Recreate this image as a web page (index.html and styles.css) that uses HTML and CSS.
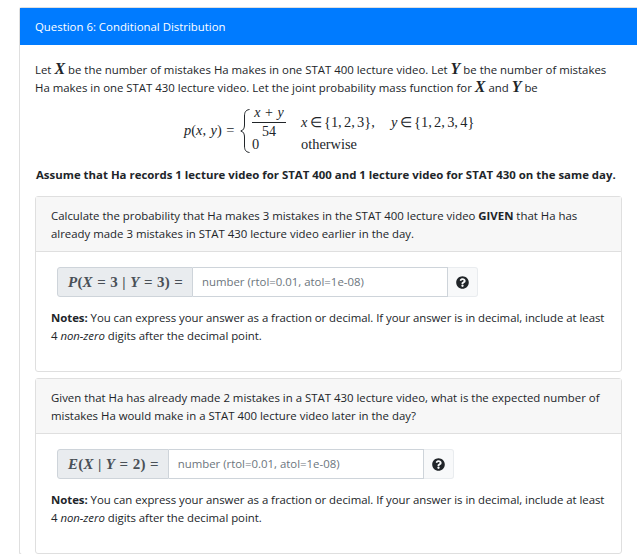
FILE: index.html
```html
<!DOCTYPE html>
<html lang="en">
<head>
<meta charset="utf-8">
<title>Question 6</title>
<link rel="stylesheet" href="styles.css">
</head>
<body>
<section class="card">
  <header class="card-head">Question 6: Conditional Distribution</header>
  <div class="card-body">
    <p class="intro">Let <span class="mv">X</span> be the number of mistakes Ha makes in one STAT 400 lecture video. Let <span class="mv">Y</span> be the number of mistakes<br>Ha makes in one STAT 430 lecture video. Let the joint probability mass function for <span class="mv">X</span> and <span class="mv">Y</span> be</p>
    <div class="display">
      <span class="lhs"><i>p</i>(<i>x</i>, <i>y</i>) =</span>
      <svg class="brace" viewBox="0 0 10 44"><path d="M9.5 .5C5.5 1 4.5 3.5 4.5 7V16C4.5 19 3.5 21.300 .8 22C3.500 22.700 4.500 25 4.500 28V37C4.500 40.500 5.500 43 9.500 43.500"/></svg>
      <div class="cases">
        <span class="frac"><span class="num"><i>x</i> + <i>y</i></span><span class="den">54</span></span>
        <span class="cond"><i>x</i> ∈ {1, 2, 3}, <span class="quad"><i>y</i> ∈ {1, 2, 3, 4}</span></span>
        <span class="zero">0</span>
        <span class="other">otherwise</span>
      </div>
    </div>
    <p class="assume">Assume that Ha records 1 lecture video for STAT 400 and 1 lecture video for STAT 430 on the same day.</p>

    <article class="part">
      <div class="part-head">Calculate the probability that Ha makes 3 mistakes in the STAT 400 lecture video <b>GIVEN</b> that Ha has<br>already made 3 mistakes in STAT 430 lecture video earlier in the day.</div>
      <div class="part-body">
        <div class="group">
          <span class="addon"><span><i>P</i>(<i>X</i> = 3 | <i>Y</i> = 3) =</span></span>
          <span class="field">number (rtol=0.01, atol=1e-08)</span>
          <span class="help"><svg viewBox="0 0 512 512" class="icon"><path d="M504 256c0 136.997-111.043 248-248 248S8 392.997 8 256C8 119.083 119.043 8 256 8s248 111.083 248 248zM262.655 90c-54.497 0-89.255 22.957-116.549 63.758-3.536 5.286-2.353 12.415 2.715 16.258l34.699 26.31c5.205 3.947 12.621 3.008 16.665-2.122 17.864-22.658 30.113-35.797 57.303-35.797 20.429 0 45.698 13.148 45.698 32.958 0 14.976-12.363 22.667-32.534 33.976C247.128 238.528 216 254.941 216 296v4c0 6.627 5.373 12 12 12h56c6.627 0 12-5.373 12-12v-1.333c0-28.462 83.186-29.647 83.186-106.667 0-58.002-60.165-102-116.531-102zM256 338c-25.365 0-46 20.635-46 46 0 25.364 20.635 46 46 46s46-20.636 46-46c0-25.365-20.635-46-46-46z"/></svg></span>
        </div>
        <p class="notes"><b>Notes:</b> You can express your answer as a fraction or decimal. If your answer is in decimal, include at least<br>4 <i>non-zero</i> digits after the decimal point.</p>
      </div>
    </article>

    <article class="part">
      <div class="part-head">Given that Ha has already made 2 mistakes in a STAT 430 lecture video, what is the expected number of<br>mistakes Ha would make in a STAT 400 lecture video later in the day?</div>
      <div class="part-body">
        <div class="group">
          <span class="addon"><span><i>E</i>(<i>X</i> | <i>Y</i> = 2) =</span></span>
          <span class="field">number (rtol=0.01, atol=1e-08)</span>
          <span class="help"><svg viewBox="0 0 512 512" class="icon"><path d="M504 256c0 136.997-111.043 248-248 248S8 392.997 8 256C8 119.083 119.043 8 256 8s248 111.083 248 248zM262.655 90c-54.497 0-89.255 22.957-116.549 63.758-3.536 5.286-2.353 12.415 2.715 16.258l34.699 26.31c5.205 3.947 12.621 3.008 16.665-2.122 17.864-22.658 30.113-35.797 57.303-35.797 20.429 0 45.698 13.148 45.698 32.958 0 14.976-12.363 22.667-32.534 33.976C247.128 238.528 216 254.941 216 296v4c0 6.627 5.373 12 12 12h56c6.627 0 12-5.373 12-12v-1.333c0-28.462 83.186-29.647 83.186-106.667 0-58.002-60.165-102-116.531-102zM256 338c-25.365 0-46 20.635-46 46 0 25.364 20.635 46 46 46s46-20.636 46-46c0-25.365-20.635-46-46-46z"/></svg></span>
        </div>
        <p class="notes"><b>Notes:</b> You can express your answer as a fraction or decimal. If your answer is in decimal, include at least<br>4 <i>non-zero</i> digits after the decimal point.</p>
      </div>
    </article>
  </div>
</section>
</body>
</html>
```
FILE: styles.css
```css
* { box-sizing: border-box; }
html, body { height: 554px; overflow: hidden; }
body {
  margin: 0;
  background: #fff;
  color: #212529;
  font-family: "Open Sans", "Noto Sans", sans-serif;
  font-size: 11.4px;
  line-height: 18px;
}
.card {
  width: 640px;
  margin: 7px 0 0 19px;
  border: 1px solid #dfdfdf;
  border-right: 0;
  border-radius: 3px 0 0 3px;
}
.card-head {
  height: 37px;
  padding: 10px 15px 0;
  background: #007bff;
  color: #fff;
}
.card-body { padding: 16px 0 0 15px; }
.intro { margin: 0; white-space: nowrap; }
.mv, .lhs, .frac, .cond, .zero, .other, .addon { font-family: "Liberation Serif", serif; }
.mv { font-style: italic; font-weight: 700; font-size: 16px; line-height: 0; }
.display {
  display: flex;
  align-items: flex-start;
  margin: 9px 0 0 149px;
  height: 45px;
  font-size: 14.4px;
}
.lhs { width: 56px; padding-top: 15px; white-space: nowrap; word-spacing: 1px; }
.brace { width: 10px; height: 44px; margin-top: 3px; fill: none; stroke: #212529; stroke-width: 1; }
.cases {
  display: grid;
  grid-template-columns: 34px auto;
  column-gap: 15px;
  margin-left: 2px;
  align-items: center;
}
.frac { display: flex; flex-direction: column; align-items: stretch; text-align: center; line-height: 13px; font-size: 14px; }
.num { border-bottom: 1px solid #212529; padding-bottom: 3px; word-spacing: 1px; }
.den { padding-top: 2px; }
.cond { white-space: nowrap; word-spacing: -1.3px; }
.quad { margin-left: 14px; }
.zero, .other { grid-row: 2; line-height: 13px; }
.assume {
  margin: 15px 0 0 1px;
  font-weight: 700;
  white-space: nowrap;
  letter-spacing: .01px;
}
.part {
  width: 587px;
  height: 176px;
  margin-top: 12px;
  border: 1px solid #dfdfdf;
  border-radius: 3px;
}
.part + .part { margin-top: 6px; }
.part-head {
  height: 55px;
  padding: 10px 15px 0;
  background: #f7f7f7;
  border-bottom: 1px solid #dfdfdf;
  white-space: nowrap;
}
.part-body { padding: 15px 15px 0; }
.group { display: flex; height: 30px; width: fit-content; margin-left: 6px; }
.addon {
  display: flex;
  align-items: center;
  padding: 0 9px 0 10px;
  background: #e9ecef;
  border: 1px solid #ced4da;
  border-radius: 3px 0 0 3px;
  color: #495057;
  font-size: 15px;
  font-weight: 700;
  letter-spacing: .2px;
  word-spacing: .4px;
  white-space: nowrap;
}
.field {
  display: flex;
  align-items: center;
  width: 255px;
  padding: 0 9px;
  border: 1px solid #ced4da;
  border-left: 0;
  color: #6c757d;
}
.help {
  display: flex;
  align-items: center;
  justify-content: center;
  width: 30px;
  background: #f8f9fa;
  border: 1px solid #e9ecef;
  border-left: 0;
  border-radius: 0 3px 3px 0;
}
.icon { width: 13px; height: 13px; fill: #212529; }
.notes { margin: 12px 0 0; white-space: nowrap; letter-spacing: -.04px; }
```
